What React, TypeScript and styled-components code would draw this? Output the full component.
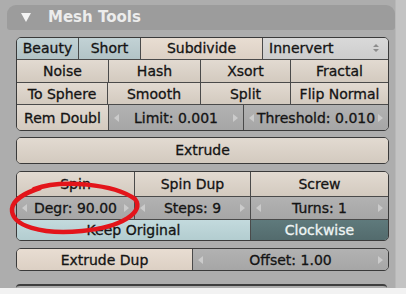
import React from "react";
import styled, { createGlobalStyle } from "styled-components";

const GlobalStyle = createGlobalStyle`
  html, body {
    margin: 0;
    padding: 0;
    background: #f2f2f2;
  }
  body {
    font-family: "DejaVu Sans", "Liberation Sans", sans-serif;
  }
`;

const Page = styled.div`
  width: 406px;
  height: 294px;
  display: flex;
  flex-direction: column;
  overflow: hidden;
  position: relative;
`;

const Upper = styled.div`
  display: flex;
  height: 288px;
`;

const Main = styled.div`
  width: 395px;
  background: #adadad;
  display: flex;
  flex-direction: column;
  padding-top: 5px;
  box-sizing: border-box;
`;

const Strip = styled.div`
  flex: 1;
  background: #c3c3c3;
  border-left: 1px solid #b8b8b8;
`;

const Lower = styled.div`
  flex: 1;
  background: #f2f2f2;
`;

const Header = styled.div`
  margin-left: 7px;
  width: 388px;
  height: 25px;
  background: #9c9c9c;
  border-radius: 9px 9px 3px 3px;
  display: flex;
  align-items: center;
  gap: 17px;
  padding-left: 14px;
  box-sizing: border-box;
  color: #ececec;
  font-size: 15px;
  font-weight: bold;
`;

const Triangle = styled.span`
  width: 0;
  height: 0;
  border-left: 5px solid transparent;
  border-right: 5px solid transparent;
  border-top: 9px solid #f4f4f4;
  margin-top: 1px;
`;

const Block = styled.div<{ $top: number }>`
  margin-top: ${(p) => p.$top}px;
  margin-left: 16px;
  width: 371px;
  border: 1px solid #3a3a3a;
  border-radius: 5px;
  overflow: hidden;
  display: flex;
  flex-direction: column;
`;

const Row = styled.div<{ $h: number }>`
  display: flex;
  height: ${(p) => p.$h}px;
  & + & {
    border-top: 1px solid #4a4a4a;
  }
`;

type Kind = "push" | "pushHi" | "toggle" | "menu" | "num" | "keep" | "dark";

const fills: Record<Kind, string> = {
  push: "linear-gradient(#e2dad1, #d3cabf)",
  pushHi: "linear-gradient(#e8ddd2, #dcd0c4)",
  toggle: "linear-gradient(#c2d2d5, #b2c3c6)",
  menu: "linear-gradient(#d9d9d9, #cdcdcd)",
  num: "linear-gradient(#b2b2b2, #a6a6a6)",
  keep: "linear-gradient(#c3dadd, #b3cdd0)",
  dark: "linear-gradient(#5f7a7c, #536b6d)",
};

const Cell = styled.div<{ $w?: number; $kind: Kind; $align?: string }>`
  position: relative;
  flex: ${(p) => (p.$w ? `0 0 ${p.$w}px` : "1")};
  background: ${(p) => fills[p.$kind]};
  color: ${(p) => (p.$kind === "dark" ? "#eef4f4" : "#141414")};
  font-size: 14px;
  -webkit-text-stroke: 0.3px currentColor;
  display: flex;
  align-items: center;
  justify-content: ${(p) => p.$align ?? "center"};
  padding: ${(p) => (p.$align ? "0 0 0 6px" : "0")};
  box-sizing: border-box;
  white-space: nowrap;
  overflow: hidden;
  & + & {
    border-left: 1px solid #4a4a4a;
  }
`;

const Arrow = styled.span<{ $side: "l" | "r" }>`
  position: absolute;
  top: 50%;
  ${(p) => (p.$side === "l" ? "left: 5px;" : "right: 5px;")}
  margin-top: -4px;
  width: 0;
  height: 0;
  border-top: 4px solid transparent;
  border-bottom: 4px solid transparent;
  ${(p) =>
    p.$side === "l"
      ? "border-right: 5px solid #cbcbcb;"
      : "border-left: 5px solid #cbcbcb;"}
`;

const MenuIcon = styled.svg`
  position: absolute;
  right: 8px;
  top: 50%;
  margin-top: -5px;
`;

const Tail = styled.div`
  margin-top: 13px;
  margin-left: 16px;
  width: 371px;
  height: 4px;
  border-top: 2px solid #3e3e3e;
  border-radius: 5px 5px 0 0;
  box-sizing: border-box;
`;

const Mark = styled.svg`
  position: absolute;
  left: 0;
  top: 0;
  pointer-events: none;
`;

const Num = ({ w, children }: { w?: number; children: React.ReactNode }) => (
  <Cell $w={w} $kind="num">
    <Arrow $side="l" />
    {children}
    <Arrow $side="r" />
  </Cell>
);

export default function App() {
  return (
    <Page>
      <GlobalStyle />
      <Upper>
        <Main>
          <Header>
            <Triangle />
            Mesh Tools
          </Header>

          <Block $top={7}>
            <Row $h={22}>
              <Cell $w={61} $kind="toggle">Beauty</Cell>
              <Cell $w={62} $kind="toggle">Short</Cell>
              <Cell $w={122} $kind="pushHi">Subdivide</Cell>
              <Cell $kind="menu" $align="flex-start">
                Innervert
                <MenuIcon width="8" height="10" viewBox="0 0 8 10">
                  <path d="M1 4 L4 1 L7 4 Z M1 6 L4 9 L7 6 Z" fill="#8c8c8c" />
                </MenuIcon>
              </Cell>
            </Row>
            <Row $h={22}>
              <Cell $w={91} $kind="push">Noise</Cell>
              <Cell $w={92} $kind="push">Hash</Cell>
              <Cell $w={90} $kind="push">Xsort</Cell>
              <Cell $kind="push">Fractal</Cell>
            </Row>
            <Row $h={22}>
              <Cell $w={90} $kind="push">To Sphere</Cell>
              <Cell $w={93} $kind="push">Smooth</Cell>
              <Cell $w={90} $kind="push">Split</Cell>
              <Cell $kind="push">Flip Normal</Cell>
            </Row>
            <Row $h={25}>
              <Cell $w={91} $kind="push">Rem Doubl</Cell>
              <Num w={135}>Limit: 0.001</Num>
              <Num>Threshold: 0.010</Num>
            </Row>
          </Block>

          <Block $top={6}>
            <Row $h={25}>
              <Cell $kind="push">Extrude</Cell>
            </Row>
          </Block>

          <Block $top={7}>
            <Row $h={25}>
              <Cell $w={117} $kind="push">Spin</Cell>
              <Cell $w={116} $kind="push">Spin Dup</Cell>
              <Cell $kind="push">Screw</Cell>
            </Row>
            <Row $h={22}>
              <Num w={117}>Degr: 90.00</Num>
              <Num w={116}>Steps: 9</Num>
              <Num>Turns: 1</Num>
            </Row>
            <Row $h={21}>
              <Cell $w={233} $kind="keep">Keep Original</Cell>
              <Cell $kind="dark">Clockwise</Cell>
            </Row>
          </Block>

          <Block $top={7}>
            <Row $h={21}>
              <Cell $w={175} $kind="pushHi">Extrude Dup</Cell>
              <Num>Offset: 1.00</Num>
            </Row>
          </Block>

          <Tail />
        </Main>
        <Strip />
      </Upper>
      <Lower />

      <Mark width="406" height="294" viewBox="0 0 406 294">
        <path
          d="M34 189 C 62 179, 114 184, 135 199 C 145 212, 122 227, 82 231 C 42 235, 11 226, 12 209 C 13 199, 25 193, 40 188"
          fill="none"
          stroke="#e3151b"
          strokeWidth="4.5"
          strokeLinecap="round"
        />
      </Mark>
    </Page>
  );
}
